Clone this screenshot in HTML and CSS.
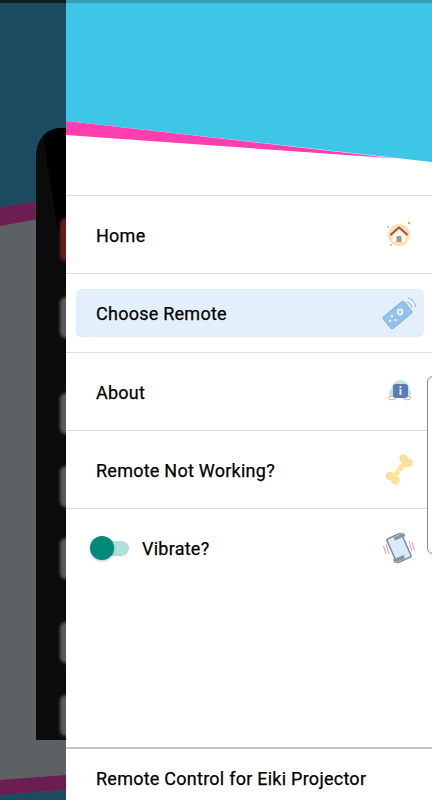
FILE: index.html
```html
<!DOCTYPE html>
<html lang="en">
    <head>
        <meta charset="UTF-8">
        <meta name="viewport" content="width=device-width, initial-scale=1.0">
        <title>Remote Control for Eiki Projector</title>
        <link rel="stylesheet" href="styles.css">
    </head>
    <body>

    <!-- dimmed app behind the drawer -->
    <svg class="backdrop" width="66" height="800" viewBox="0 0 66 800">
        <defs>
            <filter id="soft" x="-50%" y="-50%" width="200%" height="200%">
                <feGaussianBlur stdDeviation="1.500"/>
            </filter>
        </defs>
        <rect width="66" height="800" fill="#5d6164"/>
        <rect width="66" height="3" fill="#111a1e"/>
        <polygon points="0,3 66,3 66,197 0,207" fill="#1b4b5e"/>
        <polygon points="0,207 66,197 66,214 0,226" fill="#6c1d52"/>
        <polygon points="0,780 66,775 66,790 0,795" fill="#6c1d52"/>
        <polygon points="0,795 66,790 66,800 0,800" fill="#1b4b5e"/>
        <path d="M66 128 H62 C46 128 36 140 36 156 V740 H66 Z" fill="#0b0b0b"/>
        <path d="M66 128 H62 C54 128 48 131 43 136 L58 230 H66 Z" fill="#000"/>
        <g filter="url(#soft)">
            <rect x="60" y="218" width="14" height="43" rx="6" fill="#6b1a12"/>
            <rect x="60" y="297" width="14" height="41" rx="6" fill="#5a5a5a"/>
            <rect x="60" y="393" width="14" height="41" rx="6" fill="#5a5a5a"/>
            <rect x="60" y="466" width="14" height="41" rx="6" fill="#5a5a5a"/>
            <rect x="60" y="538" width="14" height="41" rx="6" fill="#5a5a5a"/>
            <rect x="60" y="622" width="14" height="41" rx="6" fill="#5a5a5a"/>
            <rect x="60" y="695" width="14" height="41" rx="6" fill="#5a5a5a"/>
        </g>
    </svg>

    <div class="drawer">
        <div class="drawer-top">
            <svg class="header-art" width="366" height="162" viewBox="0 0 366 162">
                <rect width="366" height="3" fill="#3a9fb6"/>
                <polygon points="0,3 366,3 366,162 0,121" fill="#3ec6e6"/>
                <polygon points="0,121 330,158.5 0,135" fill="#ff3eb0"/>
            </svg>
        </div>

        <div class="menu-row">
            <span class="menu-label">Home</span>
            <svg class="menu-icon" width="34" height="34" viewBox="0 0 34 34">
                <circle cx="17" cy="17" r="11" fill="#fbe0a8"/>
                <circle cx="27" cy="5" r="1.200" fill="#e8b04a"/>
                <circle cx="6" cy="9" r="0.800" fill="#888"/>
                <circle cx="9" cy="27" r="0.800" fill="#888"/>
                <path d="M10.500 16 V24 H23.500 V16 L17 10 Z" fill="#fdf6ea"/>
                <path d="M8.500 17 L17 9.500 L25.500 17" fill="none" stroke="#b0484a" stroke-width="2"/>
                <rect x="14.500" y="18" width="5" height="6" fill="#9a9aa6"/>
            </svg>
        </div>

        <div class="menu-row menu-row-current">
            <div class="menu-current">
                <span class="menu-label">Choose Remote</span>
                <svg class="menu-icon" width="34" height="34" viewBox="0 0 34 34">
                    <rect x="2" y="11.500" width="27" height="15" rx="2" transform="rotate(-40 15.500 19)" fill="#93c2ec" stroke="#7fb1e0"/>
                    <circle cx="18" cy="16" r="3.400" fill="#eaf3fb"/>
                    <circle cx="18" cy="16" r="1.400" fill="#93c2ec"/>
                    <circle cx="10" cy="20" r="1.300" fill="#eaf3fb"/>
                    <circle cx="13.500" cy="24" r="1.300" fill="#eaf3fb"/>
                    <circle cx="8" cy="25" r="1.300" fill="#eaf3fb"/>
                    <path d="M25 6 C28 7 29.500 9 30 12 M26 2 C30 3 33 6 33.500 11" fill="none" stroke="#a5a9ae" stroke-width="1"/>
                </svg>
            </div>
        </div>

        <div class="menu-row">
            <span class="menu-label">About</span>
            <svg class="menu-icon" width="34" height="34" viewBox="0 0 34 34">
                <circle cx="18.500" cy="15" r="9" fill="#bfe3e6"/>
                <circle cx="24" cy="19" r="5" fill="#bfe3e6"/>
                <circle cx="12" cy="19" r="5" fill="#bfe3e6"/>
                <ellipse cx="10" cy="24" rx="4" ry="1.800" fill="#f6f3ea" stroke="#a9a690" stroke-width="0.7"/>
                <ellipse cx="25" cy="24" rx="4" ry="1.800" fill="#f6f3ea" stroke="#a9a690" stroke-width="0.7"/>
                <rect x="11" y="10" width="15" height="14" rx="3" fill="#5a7db4"/>
                <rect x="17.500" y="12" width="2" height="2" fill="#dfe7f2"/>
                <rect x="17.500" y="15" width="2" height="6" fill="#dfe7f2"/>
            </svg>
        </div>

        <div class="menu-row">
            <span class="menu-label">Remote Not Working?</span>
            <svg class="menu-icon" width="34" height="34" viewBox="0 0 34 34">
                <g fill="#fde29a" stroke="#f2cf7c" stroke-width="0.600">
                    <circle cx="21.500" cy="6.500" r="3.800"/>
                    <circle cx="26.500" cy="11" r="3.800"/>
                    <circle cx="8" cy="24" r="3.800"/>
                    <circle cx="13.500" cy="28.500" r="3.800"/>
                </g>
                <line x1="24" y1="9" x2="11" y2="26" stroke="#fde29a" stroke-width="5"/>
                <line x1="15" y1="17.500" x2="19.500" y2="20.500" stroke="#fff" stroke-width="0.800"/>
            </svg>
        </div>

        <div class="menu-row menu-row-switch">
            <div class="switch-wrap">
                <div class="switch">
                    <div class="switch-track"></div>
                    <div class="switch-thumb"></div>
                </div>
                <span class="menu-label menu-label-switch">Vibrate?</span>
            </div>
            <svg class="menu-icon" width="34" height="34" viewBox="0 0 34 34">
                <rect x="9" y="4" width="16" height="26" rx="2" transform="rotate(-24 17 17)" fill="#d8e9f7" stroke="#7a869c" stroke-width="1.500"/>
                <path d="M11.500 6.500 L22 2 L23.500 5 L13 9.500 Z M11 28.500 L21.500 24 L23 27.500 L12.500 32 Z" fill="#8a93a6"/>
                <path d="M4 13 L7 23 M1.500 15 L4 23 M27 10 L30 20 M30 11 L32.500 19" fill="none" stroke="#e59a9a" stroke-width="1"/>
            </svg>
        </div>

        <div class="drawer-spacer"></div>

        <div class="drawer-footer">Remote Control for Eiki Projector</div>
    </div>

    <div class="side-panel"></div>

    </body>
</html>
```

FILE: styles.css
```css
* {
    box-sizing: border-box;
    margin: 0;
    padding: 0;
}
html, body {
    height: 800px;
    overflow: hidden;
}
body {
    font-family: Roboto, "Noto Sans", sans-serif;
    background-color: #5d6164;
    color: #000;
    padding-left: 66px;
}
.backdrop {
    position: absolute;
    left: 0;
    top: 0;
}
.drawer {
    position: relative;
    display: flex;
    flex-direction: column;
    width: 366px;
    height: 800px;
    background-color: #fff;
}
.drawer-top {
    height: 196px;
    border-bottom: 1px solid #dcdcdc;
}
.header-art {
    display: block;
}
.menu-row {
    display: flex;
    align-items: center;
    justify-content: space-between;
    height: 78.25px;
    padding-left: 30px;
    padding-right: 16px;
    border-bottom: 1px solid #dcdcdc;
}
.menu-row-current {
    padding-left: 10px;
    padding-right: 8px;
}
.menu-row-switch {
    border-bottom: 0;
    padding-left: 24px;
}
.menu-label {
    font-size: 18px;
    font-weight: 400;
    letter-spacing: 0.25px;
    -webkit-text-stroke: 0.25px #000;
    padding-top: 2px;
}
.menu-label-switch {
    padding-top: 0;
}
.menu-icon {
    flex-shrink: 0;
}
.menu-current {
    display: flex;
    align-items: center;
    justify-content: space-between;
    width: 100%;
    height: 48px;
    padding-left: 20px;
    padding-right: 8px;
    background-color: #e3f0fb;
    border-radius: 5px;
}
.switch-wrap {
    display: flex;
    align-items: center;
    gap: 13px;
}
.switch {
    position: relative;
    width: 39px;
    height: 24px;
}
.switch-track {
    position: absolute;
    left: 6px;
    top: 5px;
    width: 33px;
    height: 15px;
    border-radius: 8px;
    background-color: #b2dfdb;
}
.switch-thumb {
    position: absolute;
    left: 0;
    top: 0;
    width: 24px;
    height: 24px;
    border-radius: 50%;
    background-color: #00897b;
    box-shadow: 0 1px 3px rgba(0, 0, 0, 0.25);
}
.drawer-spacer {
    flex-grow: 1;
}
.drawer-footer {
    height: 53px;
    padding-left: 30px;
    padding-top: 19px;
    font-size: 18px;
    font-weight: 400;
    letter-spacing: 0.25px;
    -webkit-text-stroke: 0.25px #000;
    line-height: 22px;
    border-top: 2px solid #c4c4c4;
}
.side-panel {
    position: absolute;
    left: 427px;
    top: 376px;
    width: 12px;
    height: 178px;
    border: 1px solid #8a8a8a;
    border-radius: 8px;
    background-color: #fff;
}
```
